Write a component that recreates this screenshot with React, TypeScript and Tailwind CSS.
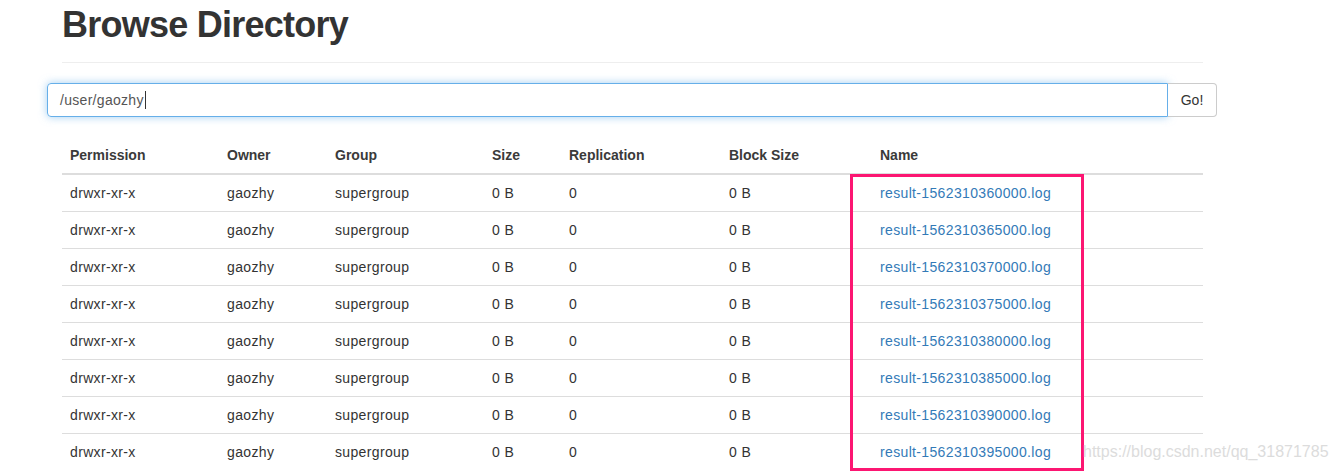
import React from 'react';

const rows = [
    'result-1562310360000.log',
    'result-1562310365000.log',
    'result-1562310370000.log',
    'result-1562310375000.log',
    'result-1562310380000.log',
    'result-1562310385000.log',
    'result-1562310390000.log',
    'result-1562310395000.log',
];

const headers = ['Permission', 'Owner', 'Group', 'Size', 'Replication', 'Block Size', 'Name'];
const widths = [157, 108, 157, 77, 160, 151, 331];

export default function App() {
    return (
        <div className="relative w-[1336px] h-[474px] overflow-hidden bg-white text-[#333] font-['Liberation_Sans',Arial,sans-serif] text-[14px]">
            {/* page header */}
            <div className="ml-[62px] w-[1141px] pt-[5px] pb-[17px] border-b border-[#eee]">
                <h1 className="text-[36px] leading-[40px] font-bold tracking-[-0.75px]">Browse Directory</h1>
            </div>

            {/* path input */}
            <div className="ml-[47px] mt-[20px] w-[1170px] h-[34px] flex">
                <div className="flex-1 flex items-center px-[12px] border border-[#66afe9] rounded-l-[4px] shadow-[0_0_8px_rgba(102,175,233,0.6)] text-[#555] tracking-[0.3px]">
                    /user/gaozhy<span className="w-px h-[18px] bg-[#333] ml-px"></span>
                </div>
                <button className="w-[49px] border border-l-0 border-[#ccc] rounded-r-[4px] bg-white text-[#333]">
                    Go!
                </button>
            </div>

            {/* listing */}
            <table className="ml-[62px] mt-[20px] w-[1141px] table-fixed border-collapse">
                <colgroup>
                    {widths.map((w, i) => (
                        <col key={i} style={{ width: w }} />
                    ))}
                </colgroup>
                <thead>
                    <tr>
                        {headers.map(h => (
                            <th key={h} className="px-2 py-2 leading-5 text-left font-bold text-[#3a3a3a] border-b-2 border-[#ddd]">
                                {h}
                            </th>
                        ))}
                    </tr>
                </thead>
                <tbody className="tracking-[0.35px]">
                    {rows.map((name, i) => (
                        <tr key={name} className={i === 0 ? '' : 'border-t border-[#ddd]'}>
                            <td className="px-2 py-2 leading-5">drwxr-xr-x</td>
                            <td className="px-2 py-2 leading-5">gaozhy</td>
                            <td className="px-2 py-2 leading-5">supergroup</td>
                            <td className="px-2 py-2 leading-5">0 B</td>
                            <td className="px-2 py-2 leading-5">0</td>
                            <td className="px-2 py-2 leading-5">0 B</td>
                            <td className="px-2 py-2 leading-5">
                                <a href="#" className="text-[#337ab7]">{name}</a>
                            </td>
                        </tr>
                    ))}
                </tbody>
            </table>

            {/* highlight box */}
            <div className="absolute left-[850px] top-[174px] w-[234px] h-[297px] border-[3px] border-[#fc1672]"></div>

            {/* watermark */}
            <div className="absolute left-[1083px] top-[443px] text-[16px] leading-[18px] text-[#dcdcdc]">
                https://blog.csdn.net/qq_31871785
            </div>
        </div>
    );
}
